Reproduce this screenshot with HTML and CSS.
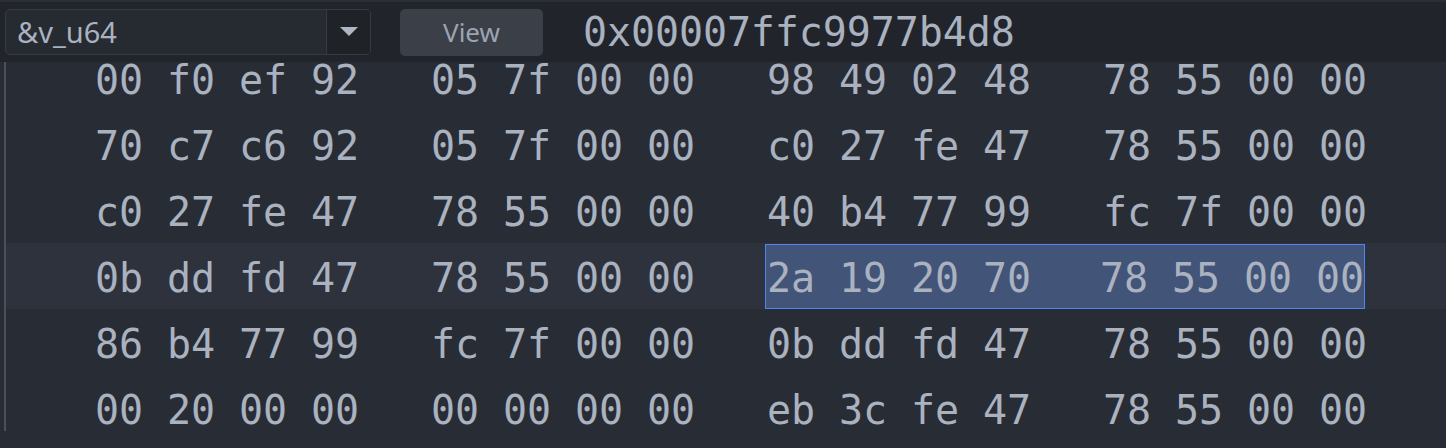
FILE: index.html
```html
<!DOCTYPE html>
<html>
<head>
<meta charset="utf-8">
<link rel="stylesheet" href="styles.css">
</head>
<body>
<div class="topbar">
  <div class="combo">
    <span class="combo-text">&amp;v_u64</span>
    <span class="combo-btn"><span class="tri"></span></span>
  </div>
  <div class="btn">View</div>
  <div class="addr">0x00007ffc9977b4d8</div>
</div>
<div class="viewer">
  <div class="rows">
    <div class="row"><span class="grp">00 f0 ef 92</span><span class="grp">05 7f 00 00</span><span class="grp">98 49 02 48</span><span class="grp">78 55 00 00</span></div>
    <div class="row"><span class="grp">70 c7 c6 92</span><span class="grp">05 7f 00 00</span><span class="grp">c0 27 fe 47</span><span class="grp">78 55 00 00</span></div>
    <div class="row"><span class="grp">c0 27 fe 47</span><span class="grp">78 55 00 00</span><span class="grp">40 b4 77 99</span><span class="grp">fc 7f 00 00</span></div>
    <div class="row current"><span class="grp">0b dd fd 47</span><span class="grp">78 55 00 00</span><span class="sel"><span class="grp">2a 19 20 70</span><span class="grp">78 55 00 00</span></span></div>
    <div class="row"><span class="grp">86 b4 77 99</span><span class="grp">fc 7f 00 00</span><span class="grp">0b dd fd 47</span><span class="grp">78 55 00 00</span></div>
    <div class="row"><span class="grp">00 20 00 00</span><span class="grp">00 00 00 00</span><span class="grp">eb 3c fe 47</span><span class="grp">78 55 00 00</span></div>
  </div>
</div>
</body>
</html>
```
FILE: styles.css
```css
html, body {
  margin: 0;
  padding: 0;
  background: #282c34;
  overflow: hidden;
  width: 1446px;
  height: 448px;
}
.topbar {
  position: relative;
  z-index: 1;
  height: 60px;
  background: #21252b;
  border-top: 2px solid #2a2e35;
  display: flex;
  align-items: center;
  padding-left: 5px;
}
.combo {
  width: 366px;
  height: 46px;
  box-sizing: border-box;
  border: 1px solid #363a42;
  border-radius: 5px;
  background: #262a31;
  display: flex;
  align-items: stretch;
  overflow: hidden;
  margin-top: -1px;
}
.combo-text {
  flex: 1;
  display: flex;
  align-items: center;
  padding-left: 11px;
  font-family: "Noto Sans", sans-serif;
  font-size: 29px;
  color: #aab2c0;
}
.combo-btn {
  width: 43px;
  border-left: 1px solid #363a42;
  background: #1f2227;
  display: flex;
  align-items: center;
  justify-content: center;
}
.tri {
  width: 0;
  height: 0;
  border-left: 9px solid transparent;
  border-right: 9px solid transparent;
  border-top: 9px solid #aeb6c4;
}
.btn {
  margin-left: 29px;
  width: 143px;
  height: 47px;
  border-radius: 5px;
  background: #3a3f48;
  color: #9ca4b2;
  font-family: "Noto Sans", sans-serif;
  font-size: 26px;
  display: flex;
  align-items: center;
  justify-content: center;
}
.addr {
  margin-left: 40px;
  font-family: "DejaVu Sans Mono", monospace;
  font-size: 40px;
  letter-spacing: -0.1px;
  color: #aab2c0;
}
.viewer {
  margin-left: 4px;
  border-left: 2px solid #4a4f58;
  height: 386px;
}
.rows {
  margin-top: -17px;
}
.row {
  box-sizing: border-box;
  height: 66px;
  padding-top: 4px;
  display: flex;
  align-items: center;
  padding-left: 89px;
  font-family: "DejaVu Sans Mono", monospace;
  font-size: 40px;
  letter-spacing: -0.08px;
  color: #aab2c0;
  white-space: pre;
}
.row.current {
  background: #2e323c;
}
.grp {
  display: inline-block;
  width: 336px;
}
.grp:last-child {
  width: auto;
}
.sel {
  display: flex;
  align-items: center;
  box-sizing: border-box;
  width: 600px;
  height: 65px;
  margin-left: -2px;
  padding-left: 1px;
  padding-top: 3px;
  background: #425478;
  border: 1px solid #4d86f2;
  margin-top: -3px;
}
```
